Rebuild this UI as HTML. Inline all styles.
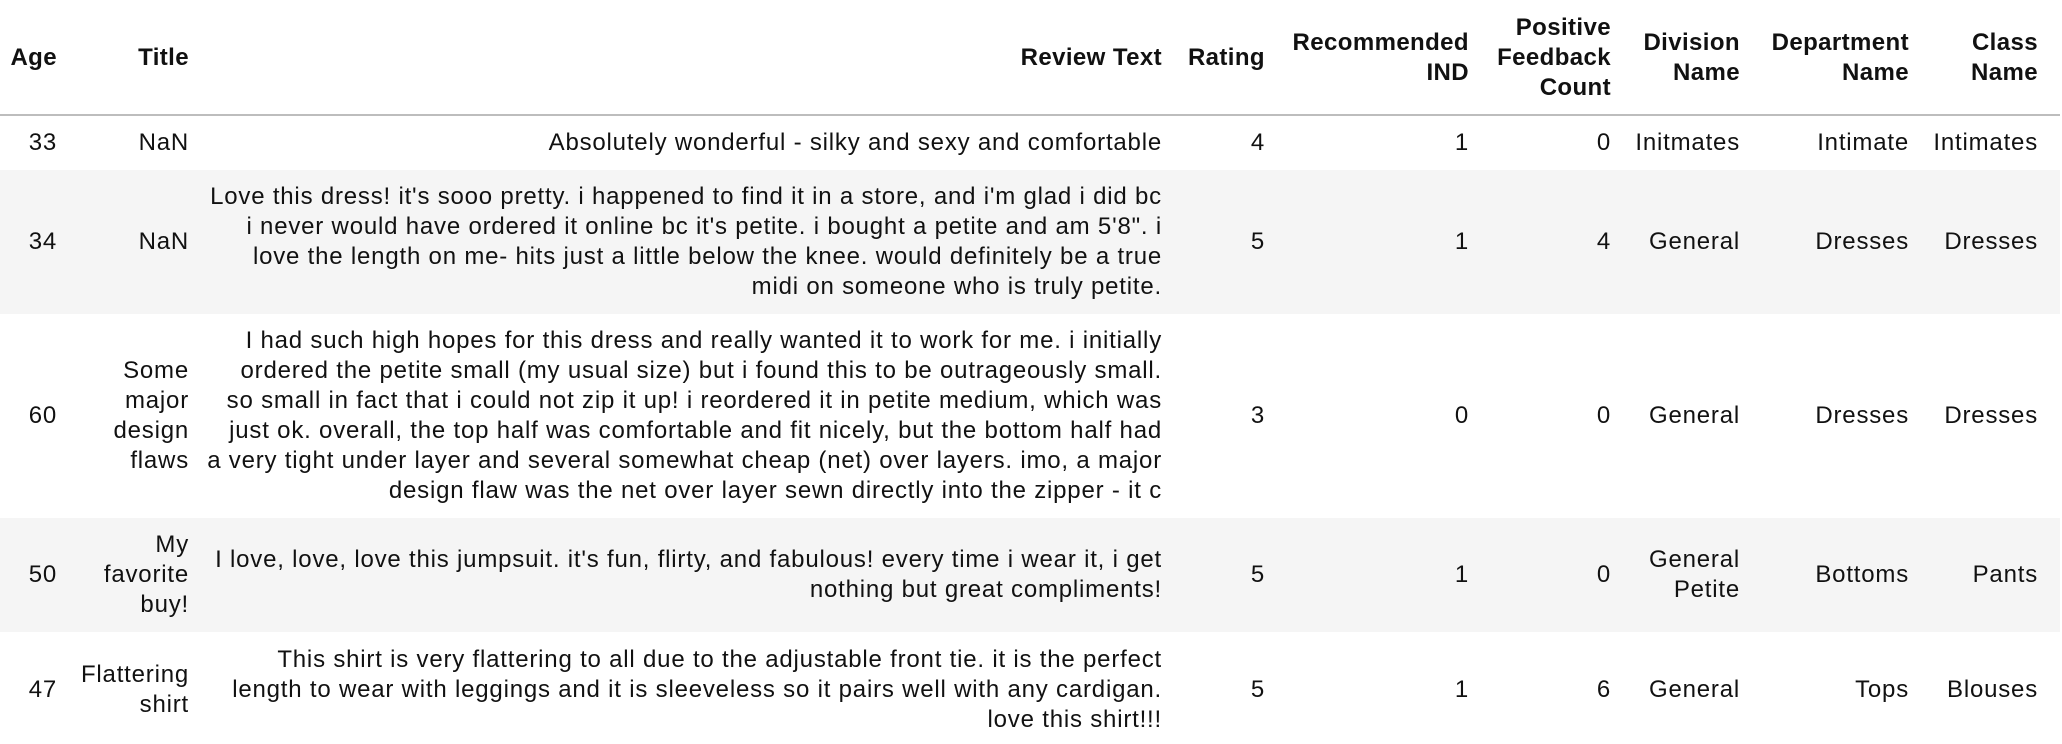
<!DOCTYPE html>
<html><head><meta charset="utf-8"><style>
html,body{margin:0;padding:0;background:#fff;width:2062px;height:744px;overflow:hidden;position:relative;
font-family:"Liberation Sans",Arial,sans-serif;font-size:24px;letter-spacing:0.8px;color:#111;}
.c{position:absolute;display:flex;align-items:center;justify-content:flex-end;text-align:right;white-space:nowrap;line-height:30px;}
.h{font-weight:bold;letter-spacing:0.4px;}
.stripe{position:absolute;left:0;width:2060px;background:#f5f5f5;}
.line{position:absolute;left:0;top:114px;width:2060px;height:2px;background:#bdbdbd;}
</style></head><body>
<div class="stripe" style="top:170px;height:144px"></div>
<div class="stripe" style="top:518px;height:114px"></div>
<div class="line"></div>

<!-- header -->
<div class="c h" style="right:2005px;top:0;height:115px">Age</div>
<div class="c h" style="right:1873px;top:0;height:115px">Title</div>
<div class="c h" style="right:900px;top:0;height:115px">Review Text</div>
<div class="c h" style="right:797px;top:0;height:115px">Rating</div>
<div class="c h" style="right:593px;top:0;height:115px">Recommended<br>IND</div>
<div class="c h" style="right:451px;top:0;height:115px">Positive<br>Feedback<br>Count</div>
<div class="c h" style="right:322px;top:0;height:115px">Division<br>Name</div>
<div class="c h" style="right:153px;top:0;height:115px">Department<br>Name</div>
<div class="c h" style="right:24px;top:0;height:115px">Class<br>Name</div>

<!-- row 1 -->
<div class="c" style="right:2005px;top:115px;height:55px">33</div>
<div class="c" style="right:1873px;top:115px;height:55px">NaN</div>
<div class="c" style="right:900px;top:115px;height:55px">Absolutely wonderful - silky and sexy and comfortable</div>
<div class="c" style="right:797px;top:115px;height:55px">4</div>
<div class="c" style="right:593px;top:115px;height:55px">1</div>
<div class="c" style="right:451px;top:115px;height:55px">0</div>
<div class="c" style="right:322px;top:115px;height:55px">Initmates</div>
<div class="c" style="right:153px;top:115px;height:55px">Intimate</div>
<div class="c" style="right:24px;top:115px;height:55px">Intimates</div>

<!-- row 2 -->
<div class="c" style="right:2005px;top:170px;height:144px">34</div>
<div class="c" style="right:1873px;top:170px;height:144px">NaN</div>
<div class="c" style="right:900px;top:170px;height:144px">Love this dress! it's sooo pretty. i happened to find it in a store, and i'm glad i did bc<br>i never would have ordered it online bc it's petite. i bought a petite and am 5'8". i<br>love the length on me- hits just a little below the knee. would definitely be a true<br>midi on someone who is truly petite.</div>
<div class="c" style="right:797px;top:170px;height:144px">5</div>
<div class="c" style="right:593px;top:170px;height:144px">1</div>
<div class="c" style="right:451px;top:170px;height:144px">4</div>
<div class="c" style="right:322px;top:170px;height:144px">General</div>
<div class="c" style="right:153px;top:170px;height:144px">Dresses</div>
<div class="c" style="right:24px;top:170px;height:144px">Dresses</div>

<!-- row 3 -->
<div class="c" style="right:2005px;top:314px;height:204px">60</div>
<div class="c" style="right:1873px;top:314px;height:204px">Some<br>major<br>design<br>flaws</div>
<div class="c" style="right:900px;top:314px;height:204px">I had such high hopes for this dress and really wanted it to work for me. i initially<br>ordered the petite small (my usual size) but i found this to be outrageously small.<br>so small in fact that i could not zip it up! i reordered it in petite medium, which was<br>just ok. overall, the top half was comfortable and fit nicely, but the bottom half had<br>a very tight under layer and several somewhat cheap (net) over layers. imo, a major<br>design flaw was the net over layer sewn directly into the zipper - it c</div>
<div class="c" style="right:797px;top:314px;height:204px">3</div>
<div class="c" style="right:593px;top:314px;height:204px">0</div>
<div class="c" style="right:451px;top:314px;height:204px">0</div>
<div class="c" style="right:322px;top:314px;height:204px">General</div>
<div class="c" style="right:153px;top:314px;height:204px">Dresses</div>
<div class="c" style="right:24px;top:314px;height:204px">Dresses</div>

<!-- row 4 -->
<div class="c" style="right:2005px;top:518px;height:114px">50</div>
<div class="c" style="right:1873px;top:518px;height:114px">My<br>favorite<br>buy!</div>
<div class="c" style="right:900px;top:518px;height:114px">I love, love, love this jumpsuit. it's fun, flirty, and fabulous! every time i wear it, i get<br>nothing but great compliments!</div>
<div class="c" style="right:797px;top:518px;height:114px">5</div>
<div class="c" style="right:593px;top:518px;height:114px">1</div>
<div class="c" style="right:451px;top:518px;height:114px">0</div>
<div class="c" style="right:322px;top:518px;height:114px">General<br>Petite</div>
<div class="c" style="right:153px;top:518px;height:114px">Bottoms</div>
<div class="c" style="right:24px;top:518px;height:114px">Pants</div>

<!-- row 5 -->
<div class="c" style="right:2005px;top:632px;height:116px">47</div>
<div class="c" style="right:1873px;top:632px;height:116px">Flattering<br>shirt</div>
<div class="c" style="right:900px;top:632px;height:116px">This shirt is very flattering to all due to the adjustable front tie. it is the perfect<br>length to wear with leggings and it is sleeveless so it pairs well with any cardigan.<br>love this shirt!!!</div>
<div class="c" style="right:797px;top:632px;height:116px">5</div>
<div class="c" style="right:593px;top:632px;height:116px">1</div>
<div class="c" style="right:451px;top:632px;height:116px">6</div>
<div class="c" style="right:322px;top:632px;height:116px">General</div>
<div class="c" style="right:153px;top:632px;height:116px">Tops</div>
<div class="c" style="right:24px;top:632px;height:116px">Blouses</div>
</body></html>
